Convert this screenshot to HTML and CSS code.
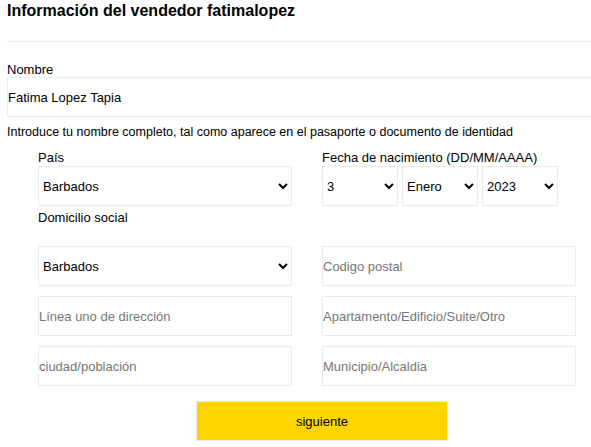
FILE: index.html
```html
<!DOCTYPE html>
<html lang="es">
<head>
<meta charset="utf-8">
<title>Información del vendedor</title>
<link rel="stylesheet" href="styles.css">
</head>
<body>
<div class="page">
  <h1 class="title">Información del vendedor fatimalopez</h1>
  <div class="divider"></div>
  <label class="label name-label" for="nombre">Nombre</label>
  <input class="name-input" id="nombre" type="text" value="Fatima Lopez Tapia">
  <p class="help">Introduce tu nombre completo, tal como aparece en el pasaporte o documento de identidad</p>

  <div class="grid">
    <div class="group">
      <label class="label" for="pais">País</label>
      <select class="field" id="pais"><option>Barbados</option></select>
    </div>
    <div class="group">
      <label class="label">Fecha de nacimiento (DD/MM/AAAA)</label>
      <div class="dates">
        <select class="field date"><option>3</option></select>
        <select class="field date"><option>Enero</option></select>
        <select class="field date"><option>2023</option></select>
      </div>
    </div>

    <div class="group domicilio">
      <label class="label" for="dom">Domicilio social</label>
    </div>
    <div class="group domicilio"></div>

    <select class="field" id="dom"><option>Barbados</option></select>
    <input class="field" type="text" placeholder="Codigo postal">

    <input class="field" type="text" placeholder="Línea uno de dirección">
    <input class="field" type="text" placeholder="Apartamento/Edificio/Suite/Otro">

    <input class="field" type="text" placeholder="ciudad/población">
    <input class="field" type="text" placeholder="Municipio/Alcaldia">
  </div>

  <div class="actions">
    <button class="next" type="button">siguiente</button>
  </div>
</div>
</body>
</html>
```
FILE: styles.css
```css
html, body {
  margin: 0;
  padding: 0;
  overflow: hidden;
}
body {
  font-family: "Liberation Sans", Arial, sans-serif;
  font-size: 13px;
  color: #000;
  background: #fff;
}
.page {
  padding: 2px 0 0 7px;
}
.title {
  margin: 0;
  font-size: 16px;
  line-height: 18px;
  font-weight: bold;
  color: #000;
}
.divider {
  margin-top: 21px;
  border-top: 1px solid #ebebeb;
}
.label {
  display: block;
  line-height: 16px;
  color: #000;
}
.name-label {
  margin-top: 20px;
  line-height: 15px;
}
.name-input {
  display: block;
  box-sizing: border-box;
  width: calc(100% + 10px);
  height: 40px;
  margin: 0;
  padding: 0;
  border: 1px solid #ebebeb;
  font: inherit;
  font-size: 13px;
  color: #000;
  outline: none;
}
.help {
  margin: 8px 0 0;
  font-size: 12.5px;
  line-height: 15px;
}
.grid {
  display: grid;
  grid-template-columns: 254px 254px;
  column-gap: 30px;
  margin: 10px 0 0 31px;
}
.group {
  display: flex;
  flex-direction: column;
}
.domicilio {
  padding-top: 4px;
  height: 36px;
}
.field {
  box-sizing: border-box;
  width: 100%;
  height: 40px;
  margin: 0 0 10px;
  padding: 0;
  border: 1px solid #ebebeb;
  border-radius: 0;
  background: #fff;
  font: inherit;
  font-size: 13px;
  color: #000;
  outline: none;
}
.group .field {
  margin-bottom: 0;
}
input.field::placeholder {
  color: #777;
  opacity: 1;
}
.dates {
  display: flex;
  gap: 4px;
}
.field.date {
  width: 76px;
}
.actions {
  display: flex;
  padding: 5px 0 0 189px;
}
.next {
  box-sizing: border-box;
  width: 252px;
  height: 40px;
  margin: 0;
  padding: 0;
  border: 1px solid #ebebeb;
  border-radius: 0;
  background: #ffd400;
  font: inherit;
  font-size: 13px;
  color: #000;
  cursor: pointer;
}
```
